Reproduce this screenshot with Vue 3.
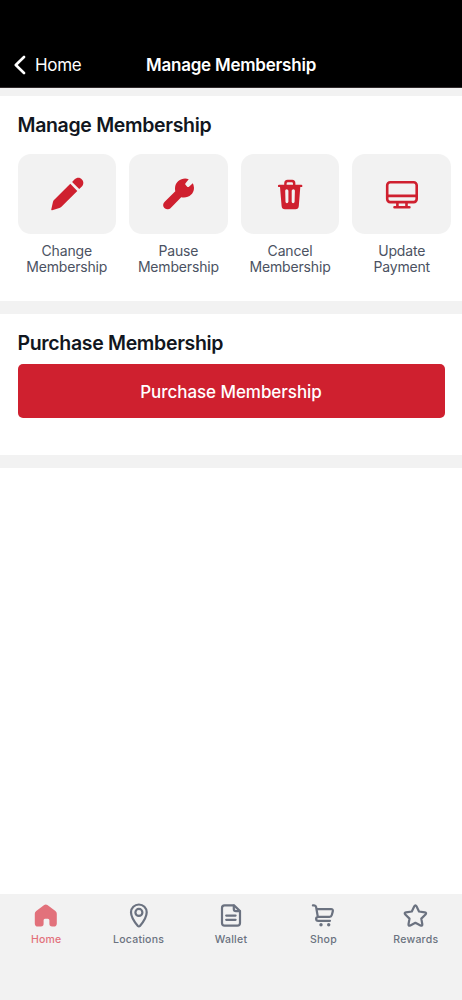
<script setup>
const actions = [
  { icon: 'pencil', lines: ['Change', 'Membership'] },
  { icon: 'wrench', lines: ['Pause', 'Membership'] },
  { icon: 'trash', lines: ['Cancel', 'Membership'] },
  { icon: 'monitor', lines: ['Update', 'Payment'] },
]
const tabs = ['Home', 'Locations', 'Wallet', 'Shop', 'Rewards']
</script>

<template>
  <div class="screen">
    <header class="topbar">
      <div class="back">
        <svg class="chevron" width="12" height="20" viewBox="0 0 12 20"><path d="M10 2 1.8 10l8.2 8" /></svg>
        <span>Home</span>
      </div>
      <h1>Manage Membership</h1>
    </header>

    <section class="manage">
      <h2>Manage Membership</h2>
      <div class="actions">
        <div v-for="a in actions" :key="a.icon" class="action">
          <div class="tile">
            <svg width="40" height="40" viewBox="0 0 40 40">
              <path v-if="a.icon === 'pencil'" d="M23.3 9.7 30.3 16.9 14.2 33 Q13.5 33.6 12.4 34L5.2 36.2Q4 36.5 4.3 35.2L6 27.8Q6.3 26.8 7 26.1ZM25.1 7.9 27.4 5.5C30.2 2.9 33.2 3.6 34.9 5.4 36.8 7.4 37 10.1 34.6 12.8L32.2 15.1Z" />
              <path v-else-if="a.icon === 'wrench'" d="M30.7 5.3C25.5 2.9 17.2 6.4 17 14.2Q17 16 17.3 17.2L6.7 27.8C2.3 32.3 8.3 38.1 12.7 33.9L23.2 23.2C29.5 24.8 36 20.8 36 13.8Q36 11.3 34.8 9.2L30.7 12.9Q29.8 13.3 29.2 12.7L27.3 10.6Q27 9.8 27.5 9.2Z" />
              <path v-else-if="a.icon === 'trash'" fill-rule="evenodd" d="M14.2 10.7V9.4Q14.2 5.8 17.6 5.8H22.3Q25.4 5.8 25.4 9.4V10.7H31.2Q32.4 10.7 32.4 11.9T31.2 13.1H30.3L28.8 32Q28.5 35.2 25.4 35.2H14.9Q11.9 35.2 11.6 32L10 13.1H9.1Q7.9 13.1 7.9 11.9T9.1 10.7ZM16.6 10.7H23V9.7Q23 8.3 21.7 8.3H18Q16.6 8.3 16.6 9.7ZM16.6 15.2Q15.2 15.2 15.2 16.7L15.5 27.8Q15.6 29.2 16.9 29.2T18.4 27.8V16.7Q18.3 15.2 16.6 15.2ZM23.4 15.2Q21.8 15.2 21.7 16.7V27.8Q21.7 29.2 23.1 29.2T24.6 27.8L24.9 16.7Q24.9 15.2 23.4 15.2Z" />
              <g v-else class="outline">
                <rect x="5.2" y="8.3" width="29.5" height="19.8" rx="3" />
                <path d="M5.2 21.9H34.7M15.4 28.2V33.2M24.5 28.2V33.2M12.5 33.3H27.4" />
              </g>
            </svg>
          </div>
          <p><span v-for="l in a.lines" :key="l">{{ l }}</span></p>
        </div>
      </div>
    </section>

    <section class="purchase">
      <h2>Purchase Membership</h2>
      <button type="button">Purchase Membership</button>
    </section>

    <nav>
      <div v-for="t in tabs" :key="t" class="tab" :class="{ active: t === 'Home' }">
        <svg width="28" height="28" viewBox="0 0 28 28">
          <path v-if="t === 'Home'" class="solid" d="M12.2 3.1Q13.8 2 15.4 3.1L23.4 9Q24.8 10 24.8 11.7V21.4Q24.8 24.5 21.7 24.5H20.1Q17.4 24.5 17.4 21.8V18.3Q17.4 16.7 15.8 16.7H12.9Q11.6 16.7 11.6 18.3V21.8Q11.6 24.5 8.9 24.5H5.9Q2.8 24.5 2.8 21.4V11.7Q2.8 10 4.2 9Z" />
          <g v-else-if="t === 'Locations'">
            <path d="M13.9 2.5C18.2 2.5 21.7 5.8 21.7 10.2C21.7 15.3 17.6 20.8 14.9 24Q13.9 25 12.9 24C10.2 20.8 6 15.3 6 10.2C6 5.8 9.6 2.5 13.9 2.5Z" />
            <circle cx="13.9" cy="10.4" r="3.5" />
          </g>
          <g v-else-if="t === 'Wallet'">
            <path d="M7.5 3.4H17L23 9V21Q23 23.6 20.4 23.6H7.5Q5 23.6 5 21V6Q5 3.4 7.5 3.4Z" />
            <path d="M16.8 3.6V7Q16.8 9.2 19 9.2H22.8M9.2 13.6H18.6M9.2 17.8H18.6" />
          </g>
          <g v-else-if="t === 'Shop'">
            <path d="M3.9 3.4H5.1Q6.8 3.4 7.1 5L8.8 14.7M7.5 7.1H22Q24.3 7.1 23.8 9.4L22.8 13Q22.3 14.8 20.5 14.8H9.4Q7 15.1 7.1 17Q7.2 18.8 9.2 18.8H21" />
            <circle class="solid" cx="12" cy="22.8" r="1.7" />
            <circle class="solid" cx="19.7" cy="22.8" r="1.7" />
          </g>
          <path v-else d="M12.3 4.3Q13.4 2.3 14.5 4.3L17 9.5 22.8 10.4Q25 10.9 23.5 12.5L19.3 16.6 20.3 22.2Q20.4 24.3 18.5 23.5L13.4 20.8 8.3 23.5Q6.3 24.3 6.5 22.2L7.5 16.6 3.3 12.5Q1.8 10.9 4 10.4L9.8 9.5Z" />
        </svg>
        <span>{{ t }}</span>
      </div>
    </nav>
  </div>
</template>

<style>
body { margin: 0; }
</style>

<style scoped>
.screen {
  width: 462px;
  height: 1000px;
  display: flex;
  flex-direction: column;
  background: #fff;
  color: #111620;
  font-family: Inter, "Liberation Sans", sans-serif;
  overflow: hidden;
}
h1, h2, p { margin: 0; }
.topbar {
  box-sizing: border-box;
  height: 88px;
  flex: none;
  padding: 48px 14px 5px;
  display: grid;
  grid-template-columns: 1fr auto 1fr;
  align-items: center;
  background: #000;
  border-bottom: 1px solid #302a2c;
  color: #fff;
}
.back { display: flex; align-items: center; gap: 9px; font-size: 17px; letter-spacing: -0.35px; }
.chevron { fill: none; stroke: #fff; stroke-width: 2.6; stroke-linecap: round; stroke-linejoin: round; }
h1 { font-size: 17px; font-weight: 600; line-height: 24px; letter-spacing: -0.22px; white-space: nowrap; }
.manage {
  box-sizing: border-box;
  height: 226px;
  flex: none;
  padding: 16px 11px 0 17.5px;
  border-top: 8px solid #f2f2f2;
  border-bottom: 13px solid #f2f2f2;
}
h2 { font-size: 19.5px; line-height: 26px; font-weight: 600; letter-spacing: -0.33px; white-space: nowrap; }
.actions { margin-top: 16px; display: flex; justify-content: space-between; }
.action { width: 98.5px; }
.tile {
  height: 79.5px;
  border-radius: 13px;
  background: #f2f2f2;
  display: flex;
  align-items: center;
  justify-content: center;
}
.tile svg { fill: #cf202f; }
.tile .outline { fill: none; stroke: #cf202f; stroke-width: 2.6; stroke-linecap: round; }
.action p { margin-top: 9px; color: #4b5262; font-size: 14px; line-height: 16.5px; letter-spacing: -0.17px; text-align: center; }
.action span { display: block; }
.purchase {
  box-sizing: border-box;
  height: 154px;
  flex: none;
  padding: 16px 17.5px 0;
  border-bottom: 13px solid #f2f2f2;
}
button {
  display: block;
  width: 100%;
  height: 54px;
  margin-top: 8.4px;
  padding: 2px 0 0;
  border: 0;
  border-radius: 5px;
  background: #cf202f;
  color: #fff;
  font: 500 17px/24px Inter, "Liberation Sans", sans-serif;
  letter-spacing: -0.06px;
}
nav {
  box-sizing: border-box;
  height: 106px;
  flex: none;
  margin-top: auto;
  padding-top: 7.5px;
  display: flex;
  background: #f2f2f2;
}
.tab {
  flex: 1;
  display: flex;
  flex-direction: column;
  align-items: center;
  color: #6b7280;
  font-size: 10.5px;
  font-weight: 500;
  line-height: 14px;
}
.tab svg { fill: none; stroke: currentColor; stroke-width: 2.2; stroke-linecap: round; stroke-linejoin: round; }
.tab span { margin-top: 3px; letter-spacing: 0.24px; }
.tab .solid { fill: currentColor; stroke: none; }
.active { color: #e2717b; }
</style>
